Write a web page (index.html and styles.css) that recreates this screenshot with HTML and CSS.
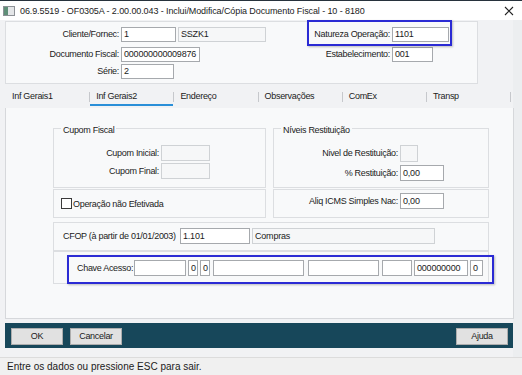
FILE: index.html
```html
<!DOCTYPE html>
<html lang="pt-BR">
<head>
    <meta charset="UTF-8">
    <meta name="viewport" content="width=device-width, initial-scale=1.0">
    <title>Inclui/Modifica/Cópia Documento Fiscal</title>
    <link rel="stylesheet" href="styles.css">
</head>
<body>
    <div class="titlebar">
        <svg class="app-icon" width="12" height="10" viewBox="0 0 12 10">
            <rect x="0.5" y="0.5" width="11" height="9" fill="#e4e6e8" stroke="#8d9196"/>
            <rect x="1" y="1" width="4" height="8" fill="#5f8f78"/>
        </svg>
        <span class="title">06.9.5519 - OF0305A - 2.00.00.043 - Inclui/Modifica/Cópia Documento Fiscal - 10 - 8180</span>
        <svg class="close" width="10" height="10" viewBox="0 0 10 10">
            <path d="M1 1 L9 9 M9 1 L1 9" stroke="#222" stroke-width="1.1"/>
        </svg>
    </div>

    <div class="client">
        <div class="header-box">
            <div class="header-grid">
                <span class="lbl">Cliente/Fornec:</span>
                <div class="pair">
                    <span class="inp w-cli">1</span>
                    <span class="inp off w-name">SSZK1</span>
                </div>
                <span class="lbl">Natureza Operação:</span>
                <span class="inp w-nat">1101</span>

                <span class="lbl">Documento Fiscal:</span>
                <span class="inp w-doc">000000000009876</span>
                <span class="lbl">Estabelecimento:</span>
                <span class="inp w-est">001</span>

                <span class="lbl">Série:</span>
                <span class="inp w-serie">2</span>
            </div>
            <div class="highlight hl-natureza"></div>
        </div>

        <div class="tabs">
            <div class="tab">Inf Gerais1</div>
            <div class="tab-sep"></div>
            <div class="tab active">Inf Gerais2</div>
            <div class="tab-sep"></div>
            <div class="tab">Endereço</div>
            <div class="tab-sep"></div>
            <div class="tab">Observações</div>
            <div class="tab-sep"></div>
            <div class="tab">ComEx</div>
            <div class="tab-sep"></div>
            <div class="tab">Transp</div>
            <div class="tab-sep"></div>
        </div>

        <div class="page">
            <div class="grow">
                <div class="group g-left g-tall">
                    <div class="gtitle">Cupom Fiscal</div>
                    <div class="field first">
                        <span class="lbl l-cupom">Cupom Inicial:</span>
                        <span class="inp off w-cupom"></span>
                    </div>
                    <div class="field second">
                        <span class="lbl l-cupom">Cupom Final:</span>
                        <span class="inp off w-cupom"></span>
                    </div>
                </div>
                <div class="group g-right g-tall">
                    <div class="gtitle">Níveis Restituição</div>
                    <div class="field first">
                        <span class="lbl l-right">Nivel de Restituição:</span>
                        <span class="inp off w-nivel"></span>
                    </div>
                    <div class="field third">
                        <span class="lbl l-right">% Restituição:</span>
                        <span class="inp w-perc">0,00</span>
                    </div>
                </div>
            </div>

            <div class="grow row2">
                <div class="group g-left g-short check-row">
                    <span class="checkbox"></span>
                    <span class="check-label">Operação não Efetivada</span>
                </div>
                <div class="group g-right g-short pad-top">
                    <div class="field">
                        <span class="lbl l-right">Aliq ICMS Simples Nac:</span>
                        <span class="inp w-perc">0,00</span>
                    </div>
                </div>
            </div>

            <div class="group g-full g-short cfop">
                <div class="field">
                    <span class="lbl l-cfop">CFOP (à partir de 01/01/2003)</span>
                    <span class="inp w-cfop">1.101</span>
                    <span class="inp off w-compras">Compras</span>
                </div>
            </div>

            <div class="group g-full chave">
                <div class="highlight hl-chave">
                    <span class="lbl l-chave">Chave Acesso:</span>
                    <span class="inp k1"></span>
                    <span class="inp k2">0</span>
                    <span class="inp k3">0</span>
                    <span class="inp k4"></span>
                    <span class="inp k5"></span>
                    <span class="inp k6"></span>
                    <span class="inp k7">000000000</span>
                    <span class="inp k8">0</span>
                </div>
            </div>
        </div>

        <div class="buttonbar">
            <button class="btn">OK</button>
            <button class="btn">Cancelar</button>
            <button class="btn help">Ajuda</button>
        </div>
    </div>

    <div class="statusbar">Entre os dados ou pressione ESC para sair.</div>
</body>
</html>
```

FILE: styles.css
```css
* {
    box-sizing: border-box;
}

body {
    margin: 0;
    width: 522px;
    height: 375px;
    overflow: hidden;
    background: #eceef0;
    font-family: "Liberation Sans", Arial, sans-serif;
    font-size: 9px;
    color: #1b1b1b;
}

/* title bar */
.titlebar {
    height: 20px;
    background: #fff;
    border-top: 1px solid #27323c;
    display: flex;
    align-items: center;
    padding-left: 3px;
}
.title {
    margin-left: 5px;
    letter-spacing: -0.1px;
    white-space: nowrap;
}
.close {
    margin-left: auto;
    margin-right: 8px;
}

/* dialog body */
.client {
    width: 513px;
    height: 337px;
    background: #f1f2f4;
    padding-top: 1px;
}

.lbl {
    white-space: nowrap;
    letter-spacing: -0.3px;
    line-height: 15px;
}
.inp {
    display: block;
    height: 15px;
    border: 1px solid #a6a9ad;
    background: #fff;
    line-height: 13px;
    padding-left: 2px;
    white-space: nowrap;
    overflow: hidden;
    letter-spacing: -0.2px;
}
.inp.off {
    border-color: #cfd2d5;
    background: #f6f7f8;
}

.highlight {
    border: 2px solid #2b2bd4;
    box-shadow: 1px 1px 2px rgba(0, 0, 0, 0.25);
}

.header-box {
    position: relative;
    margin-left: 5px;
    width: 473px;
    height: 63px;
    border: 1px solid #dcdee1;
    background: #f8f9fa;
    padding-top: 5px;
}
.header-grid {
    display: grid;
    grid-template-columns: 113px 146px 121px 57px;
    grid-template-rows: 20px 17px 15px;
    column-gap: 2px;
    align-items: start;
}
.header-grid .lbl {
    text-align: right;
}
.pair {
    display: flex;
    gap: 2px;
}
.w-cli { width: 55px; }
.w-name { width: 88px; }
.w-nat { width: 57px; }
.w-doc { width: 79px; }
.w-est { width: 41px; }
.w-serie { width: 53px; }

.hl-natureza {
    position: absolute;
    left: 301px;
    top: -2px;
    width: 145px;
    height: 26px;
}

/* tabs */
.tabs {
    display: flex;
    height: 20px;
    margin-top: 4px;
    padding-left: 6px;
}
.tab {
    width: 83.2px;
    height: 18px;
    padding-left: 6px;
    line-height: 16px;
    border-bottom: 2px solid transparent;
    letter-spacing: -0.3px;
    white-space: nowrap;
}
.tab.active {
    border-bottom-color: #2a8fd8;
}
.tab-sep {
    width: 1px;
    height: 10px;
    margin-top: 4px;
    background: #c6c8cc;
}

/* tab page */
.page {
    margin-left: 5px;
    width: 509px;
    height: 211px;
    border: 1px solid #d6d8db;
    border-top: none;
    background: #f8f9fa;
    padding: 20px 0 0 47px;
}
.grow {
    display: flex;
    gap: 7px;
}
.row2 {
    margin-top: 1px;
}
.group {
    border: 1px solid #dcdee1;
}
.g-left { width: 213px; }
.g-right { width: 216px; }
.g-full { width: 436px; }
.g-tall { height: 60px; }
.g-short { height: 29px; }

.gtitle {
    display: table;
    margin: -4px 0 0 7px;
    padding: 0 2px;
    background: #f8f9fa;
    line-height: 11px;
    letter-spacing: -0.3px;
}

.field {
    display: flex;
    align-items: center;
    gap: 2px;
}
.field .inp {
    height: 16px;
    line-height: 14px;
}
.field.first { margin-top: 9px; }
.field.second { margin-top: 2px; }
.field.third { margin-top: 3px; }

.l-cupom { width: 105px; text-align: right; }
.l-right { width: 124px; text-align: right; }
.w-cupom { width: 49px; }
.w-nivel { width: 18px; }
.field .w-nivel { height: 17px; }
.w-perc { width: 44px; }

.check-row {
    display: flex;
    align-items: center;
    padding-left: 7px;
}
.checkbox {
    width: 11px;
    height: 11px;
    border: 1px solid #3a3a3a;
    background: #fff;
}
.check-label {
    margin-left: 1px;
    letter-spacing: -0.3px;
}
.pad-top {
    padding-top: 3px;
}

.cfop {
    margin-top: 4px;
    padding: 5px 0 0 9px;
}
.l-cfop { width: 115px; }
.w-cfop { width: 70px; }
.w-compras { width: 183px; }

.chave {
    height: 33px;
    padding: 3px 0 0 13px;
}
.hl-chave {
    height: 29px;
    margin-right: -6px;
    display: flex;
    align-items: flex-start;
    padding: 3px 0 0 8px;
}
.hl-chave .inp {
    height: 16px;
    line-height: 14px;
}
.l-chave {
    width: 57px;
    line-height: 16px;
}
.k1 { width: 52px; }
.k2 { width: 10px; margin-left: 2px; padding-left: 2px; }
.k3 { width: 10px; margin-left: 2px; padding-left: 2px; }
.k4 { width: 91px; margin-left: 3px; }
.k5 { width: 71px; margin-left: 4px; }
.k6 { width: 30px; margin-left: 3px; }
.k7 { width: 54px; margin-left: 2px; }
.k8 { width: 13px; margin-left: 2px; }

/* buttons */
.buttonbar {
    margin: 4px 0 0 5px;
    width: 508px;
    height: 25px;
    background: #17475a;
    display: flex;
    align-items: center;
    gap: 7px;
    padding: 1px 5px 0 6px;
}
.btn {
    width: 52px;
    height: 17px;
    padding: 0;
    background: #e1e1e1;
    border: 1px solid #adadad;
    font-family: "Liberation Sans", Arial, sans-serif;
    font-size: 9px;
    letter-spacing: -0.3px;
    color: #1b1b1b;
}
.btn.help {
    margin-left: auto;
}

.statusbar {
    height: 18px;
    border-top: 1px solid #dcdcdc;
    background: #f0f0f0;
    padding-left: 7px;
    font-size: 10px;
    line-height: 17px;
}
```
